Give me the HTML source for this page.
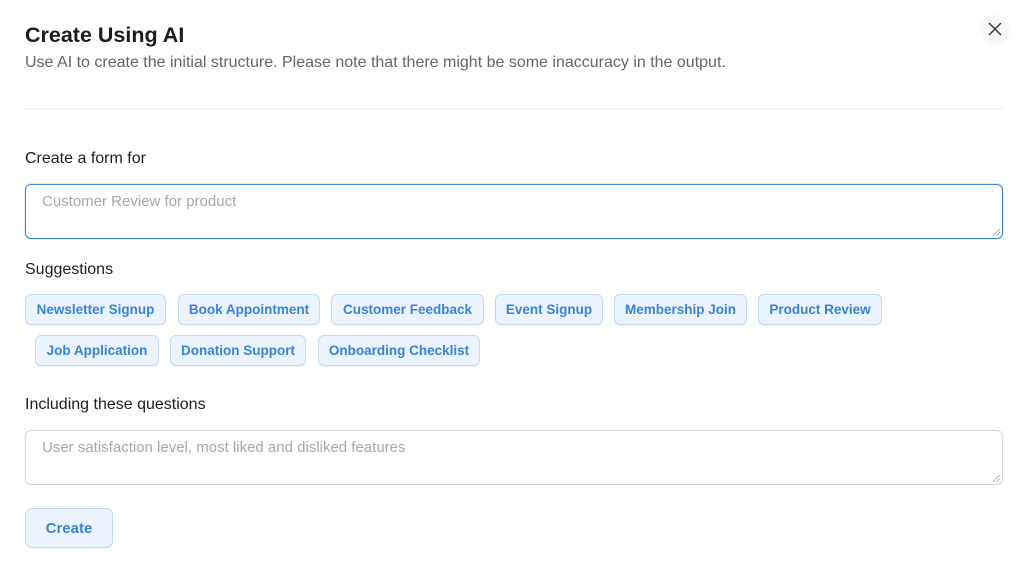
<!DOCTYPE html>
<html><head><style>
*{box-sizing:border-box;margin:0;padding:0}
body{width:1024px;height:568px;background:#fff;font-family:"Liberation Sans",sans-serif;position:relative;overflow:hidden;color:#1f1f1f}
.a{position:absolute;white-space:nowrap}
.chip{position:absolute;height:31px;border:1px solid #c3d9f2;background:#eaf3fe;border-radius:6px;color:#3a84d6;font-size:13.5px;font-weight:bold;display:flex;align-items:center;justify-content:center;box-shadow:0 1px 1px rgba(0,0,0,.04)}
.ta{position:absolute;left:25px;width:978px;height:55px;border-radius:6px;background:#fff;padding:8px 16px;font-size:15px;color:#a8a8a8}
.rz{position:absolute;right:2px;bottom:2px;width:7px;height:7px;background:linear-gradient(135deg,transparent 45%,#999 45%,#999 52%,transparent 52%,transparent 70%,#999 70%,#999 77%,transparent 77%)}
</style></head><body>
<div class="a" style="left:25px;top:23px;font-size:21.5px;font-weight:bold;color:#1d1d1d">Create Using AI</div>
<div class="a" style="left:25px;top:54px;font-size:16px;color:#666">Use AI to create the initial structure. Please note that there might be some inaccuracy in the output.</div>
<div class="a" style="left:980px;top:15px;width:30px;height:30px;border-radius:50%;background:#f8f8f8"></div>
<svg class="a" style="left:988px;top:22px" width="14" height="14" viewBox="0 0 14 14"><path d="M1 1L13 13M13 1L1 13" stroke="#333" stroke-width="1.4"/></svg>
<div class="a" style="left:25px;top:108px;width:978px;height:1px;background:#ececec"></div>
<div class="a" style="left:25px;top:150px;font-size:16px;color:#1f1f1f">Create a form for</div>
<div class="ta" style="top:184px;border:1px solid #3b86d6;box-shadow:0 0 0 1px rgba(59,134,214,.15)">Customer Review for product<div class="rz"></div></div>
<div class="a" style="left:25px;top:261px;font-size:16px">Suggestions</div>
<div class="chip" style="left:25px;top:294px;width:141px">Newsletter Signup</div>
<div class="chip" style="left:178px;top:294px;width:142px">Book Appointment</div>
<div class="chip" style="left:331px;top:294px;width:153px">Customer Feedback</div>
<div class="chip" style="left:495px;top:294px;width:108px">Event Signup</div>
<div class="chip" style="left:614px;top:294px;width:133px">Membership Join</div>
<div class="chip" style="left:758px;top:294px;width:124px">Product Review</div>
<div class="chip" style="left:35px;top:335px;width:124px">Job Application</div>
<div class="chip" style="left:170px;top:335px;width:136px">Donation Support</div>
<div class="chip" style="left:318px;top:335px;width:162px">Onboarding Checklist</div>
<div class="a" style="left:25px;top:396px;font-size:16px">Including these questions</div>
<div class="ta" style="top:430px;border:1px solid #d6d6d6">User satisfaction level, most liked and disliked features<div class="rz"></div></div>
<div class="chip" style="left:25px;top:508px;width:88px;height:40px;font-size:15px;border-radius:7px">Create</div>
</body></html>
